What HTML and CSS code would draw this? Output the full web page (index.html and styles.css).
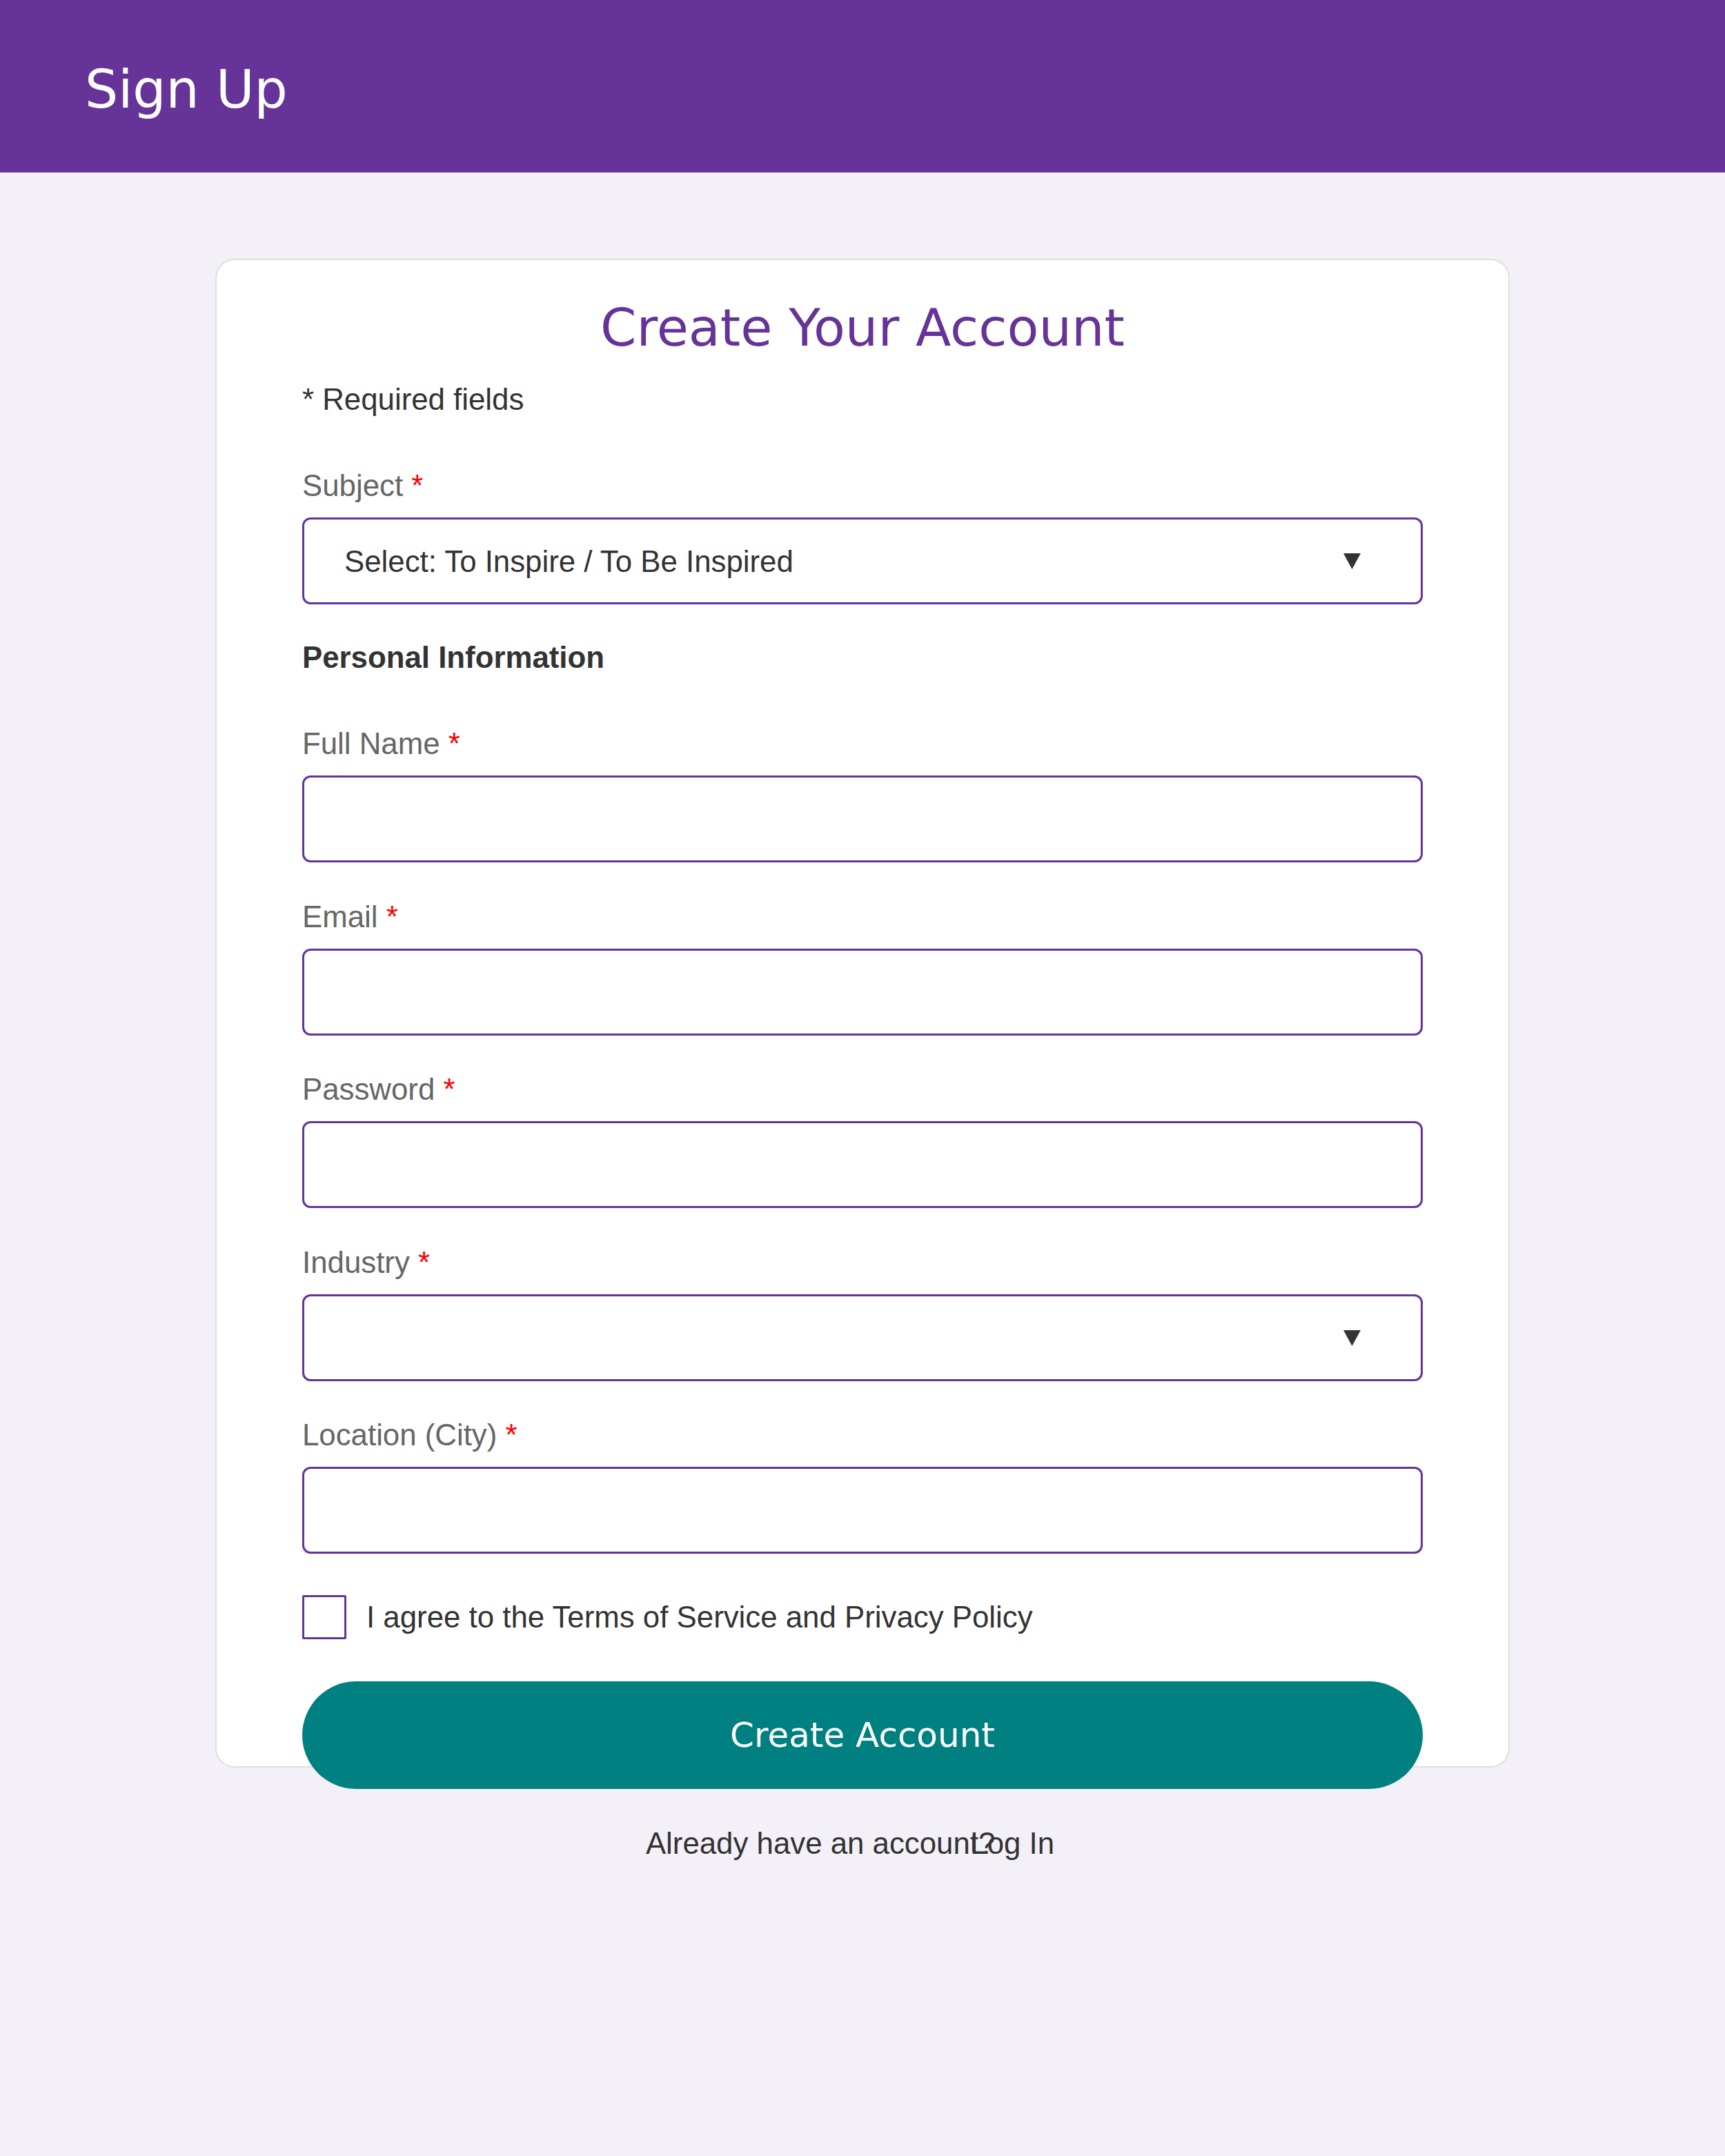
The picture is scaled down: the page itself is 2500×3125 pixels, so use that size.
FILE: index.html
```html
<!DOCTYPE html>
<html lang="en">
<head>
<meta charset="utf-8">
<title>Sign Up</title>
<link rel="stylesheet" href="styles.css">
</head>
<body>
<header class="topbar">
  <h1 class="topbar-title">Sign Up</h1>
</header>
<main class="page">
  <form class="card">
    <h2 class="card-title">Create Your Account</h2>
    <p class="note">* Required fields</p>

    <div class="field field-lead">
      <label class="label">Subject <span class="req">*</span></label>
      <div class="select-wrap">
        <select class="control select"><option>Select: To Inspire / To Be Inspired</option></select>
        <svg class="arrow" viewBox="0 0 25 23" width="25" height="23"><polygon points="0,0 25,0 12.5,23" fill="#333"/></svg>
      </div>
    </div>

    <h3 class="section">Personal Information</h3>

    <div class="field field-lead">
      <label class="label">Full Name <span class="req">*</span></label>
      <input class="control" type="text">
    </div>
    <div class="field">
      <label class="label">Email <span class="req">*</span></label>
      <input class="control" type="email">
    </div>
    <div class="field">
      <label class="label">Password <span class="req">*</span></label>
      <input class="control" type="password">
    </div>
    <div class="field">
      <label class="label">Industry <span class="req">*</span></label>
      <div class="select-wrap">
        <select class="control select"><option></option></select>
        <svg class="arrow" viewBox="0 0 25 23" width="25" height="23"><polygon points="0,0 25,0 12.5,23" fill="#333"/></svg>
      </div>
    </div>
    <div class="field">
      <label class="label">Location (City) <span class="req">*</span></label>
      <input class="control" type="text">
    </div>

    <label class="agree">
      <input class="check" type="checkbox">
      <span class="agree-text">I agree to the Terms of Service and Privacy Policy</span>
    </label>

    <button class="submit" type="button">Create Account</button>
  </form>
  <p class="login">Already have an account?<a class="login-link">Log In</a></p>
</main>
</body>
</html>
```

FILE: styles.css
```css
html, body {
  margin: 0;
  padding: 0;
}

body {
  background: #f4f0f8;
  min-height: 3125px;
  font-family: "Liberation Sans", Arial, sans-serif;
  font-size: 43.8px;
  line-height: 50px;
  color: #333;
}

.topbar {
  background: #663399;
  height: 250px;
  box-sizing: border-box;
  padding: 85px 0 0 123px;
}

.topbar-title {
  margin: 0;
  font-family: "DejaVu Sans", sans-serif;
  font-weight: normal;
  font-size: 76px;
  line-height: 90px;
  color: #fff;
}

.page {
  display: flex;
  flex-direction: column;
  align-items: center;
}

.card {
  display: flex;
  flex-direction: column;
  width: 1876px;
  height: 2187px;
  box-sizing: border-box;
  margin-top: 125px;
  padding: 53px 124px 0;
  background: #fff;
  border: 2px solid #dedede;
  border-radius: 28px;
}

.card-title {
  margin: 0;
  font-family: "DejaVu Sans", sans-serif;
  font-weight: normal;
  font-size: 75px;
  line-height: 90px;
  text-align: center;
  color: #663399;
}

.note {
  margin: 34px 0 0;
  color: #333;
}

.field {
  display: flex;
  flex-direction: column;
  margin-top: 53.5px;
}

.field-lead {
  margin-top: 75px;
}

.label {
  color: #666;
}

.req {
  color: #ff0000;
}

.control {
  display: block;
  width: 100%;
  height: 126px;
  box-sizing: border-box;
  margin-top: 21px;
  padding: 0 58px;
  border: 3px solid #663399;
  border-radius: 12px;
  background: #fff;
  font-family: "Liberation Sans", Arial, sans-serif;
  font-size: 43.8px;
  color: #333;
  outline: none;
}

.select-wrap {
  position: relative;
  margin-top: 21px;
}

.select-wrap .control {
  margin-top: 0;
}

.select {
  appearance: none;
  -webkit-appearance: none;
}

.arrow {
  position: absolute;
  right: 90px;
  top: 52px;
  pointer-events: none;
}

.section {
  margin: 52px 0 0;
  font-size: 43.8px;
  line-height: 50px;
  font-weight: bold;
  color: #333;
}

.agree {
  display: flex;
  align-items: center;
  gap: 29px;
  margin-top: 60px;
  height: 64px;
  color: #333;
}

.check {
  appearance: none;
  -webkit-appearance: none;
  width: 64px;
  height: 64px;
  margin: 0;
  box-sizing: border-box;
  border: 3px solid #663399;
  border-radius: 2px;
  background: #fff;
  flex: none;
}

.submit {
  display: block;
  width: 100%;
  height: 156px;
  margin-top: 61px;
  border: none;
  border-radius: 78px;
  background: #008080;
  color: #fff;
  font-family: "DejaVu Sans", sans-serif;
  font-size: 50px;
  padding: 0;
  flex: none;
}

.login {
  margin: 85px 0 0;
  text-align: center;
  color: #333;
}

.login-link {
  position: relative;
  left: -36px;
  color: #333;
  text-decoration: none;
}
```
